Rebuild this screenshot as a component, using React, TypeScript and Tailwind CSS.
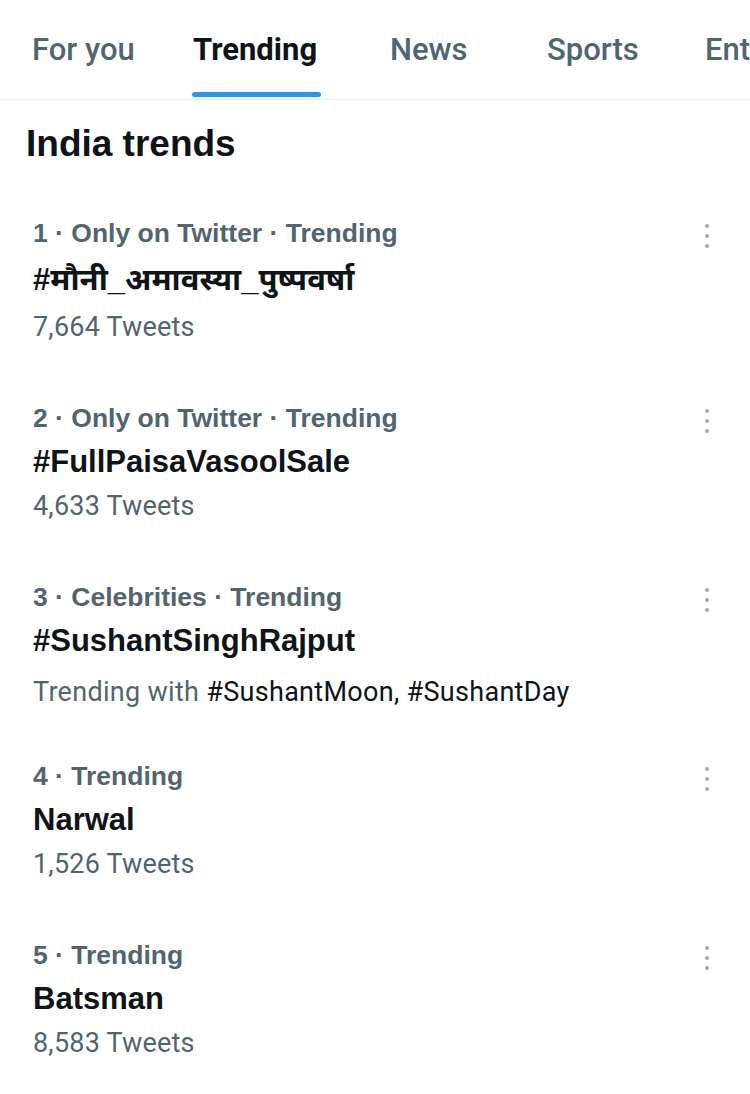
import React from "react";

const tabs = [
  { label: "For you", w: "w-[161px]", active: false },
  { label: "Trending", w: "w-[197px]", active: true },
  { label: "News", w: "w-[157px]", active: false },
  { label: "Sports", w: "w-[158px]", active: false },
  { label: "Entertainment", w: "w-[200px]", active: false },
];

type Trend = {
  meta: string;
  title: string;
  count?: string;
  withTags?: string;
  titleH: string;
  pb: string;
};

const trends: Trend[] = [
  { meta: "1 · Only on Twitter · Trending", title: "#मौनी_अमावस्या_पुष्पवर्षा", count: "7,664 Tweets", titleH: "h-[50px]", pb: "pb-[25px]" },
  { meta: "2 · Only on Twitter · Trending", title: "#FullPaisaVasoolSale", count: "4,633 Tweets", titleH: "h-[44px]", pb: "pb-[25px]" },
  { meta: "3 · Celebrities · Trending", title: "#SushantSinghRajput", withTags: "#SushantMoon, #SushantDay", titleH: "h-[44px]", pb: "pb-[18px]" },
  { meta: "4 · Trending", title: "Narwal", count: "1,526 Tweets", titleH: "h-[44px]", pb: "pb-[25px]" },
  { meta: "5 · Trending", title: "Batsman", count: "8,583 Tweets", titleH: "h-[44px]", pb: "pb-[25px]" },
];

function Dots() {
  return (
    <div className="w-[20px] flex flex-col items-center gap-[6px] pt-[13px]">
      <span className="block w-[4px] h-[4px] rounded-full bg-[#a3a8ad]" />
      <span className="block w-[4px] h-[4px] rounded-full bg-[#a3a8ad]" />
      <span className="block w-[4px] h-[4px] rounded-full bg-[#a3a8ad]" />
    </div>
  );
}

export default function App() {
  const arial = { fontFamily: '"Liberation Sans", "Noto Sans", Arial, sans-serif' };
  const roboto = { fontFamily: 'Roboto, "Liberation Sans", sans-serif' };
  return (
    <div className="w-[750px] h-[1094px] bg-white overflow-hidden">
      {/* Tabs */}
      <div
        className="flex h-[100px] border-b border-[#eceff1] pl-[32px] whitespace-nowrap overflow-hidden"
        style={roboto}
      >
        {tabs.map((t) => (
          <div key={t.label} className={`${t.w} shrink-0 flex flex-col items-start`}>
            <span
              className={`pt-[32px] leading-[36px] text-[31px] ${
                t.active ? "font-bold text-[#0f1419]" : "font-medium text-[#536471]"
              }`}
            >
              {t.label}
            </span>
            {t.active && <span className="mt-auto mb-[2px] -ml-[1px] w-[129px] h-[5px] rounded-full bg-[#1d9bf0]" />}
          </div>
        ))}
      </div>

      {/* Heading */}
      <div className="pt-[22px] pb-[23px] pl-[26px]">
        <h1 className="text-[37px] leading-[44px] font-bold text-[#0f1419]" style={arial}>
          India trends
        </h1>
      </div>

      {/* Trends */}
      {trends.map((t) => (
        <div key={t.title} className={`flex pl-[33px] pr-[33px] pt-[22px] ${t.pb}`}>
          <div className="flex-1 flex flex-col">
            <div className="h-[44px] leading-[44px] text-[26.5px] font-bold text-[#536471]" style={arial}>
              {t.meta}
            </div>
            <div
              className={`${t.titleH} flex items-center text-[31px] font-bold text-[#0f1419]`}
              style={{ fontFamily: '"Liberation Sans", "Noto Sans", "Noto Sans Devanagari", sans-serif' }}
            >
              {t.title}
            </div>
            {t.count && (
              <div className="h-[44px] leading-[44px] text-[27px] tracking-[0.2px] text-[#536471]" style={roboto}>
                {t.count}
              </div>
            )}
            {t.withTags && (
              <div
                className="mt-[7px] h-[44px] leading-[44px] text-[27px] tracking-[0.3px] text-[#536471]"
                style={roboto}
              >
                Trending with <span className="text-[#0f1419]">{t.withTags}</span>
              </div>
            )}
          </div>
          <Dots />
        </div>
      ))}
    </div>
  );
}
